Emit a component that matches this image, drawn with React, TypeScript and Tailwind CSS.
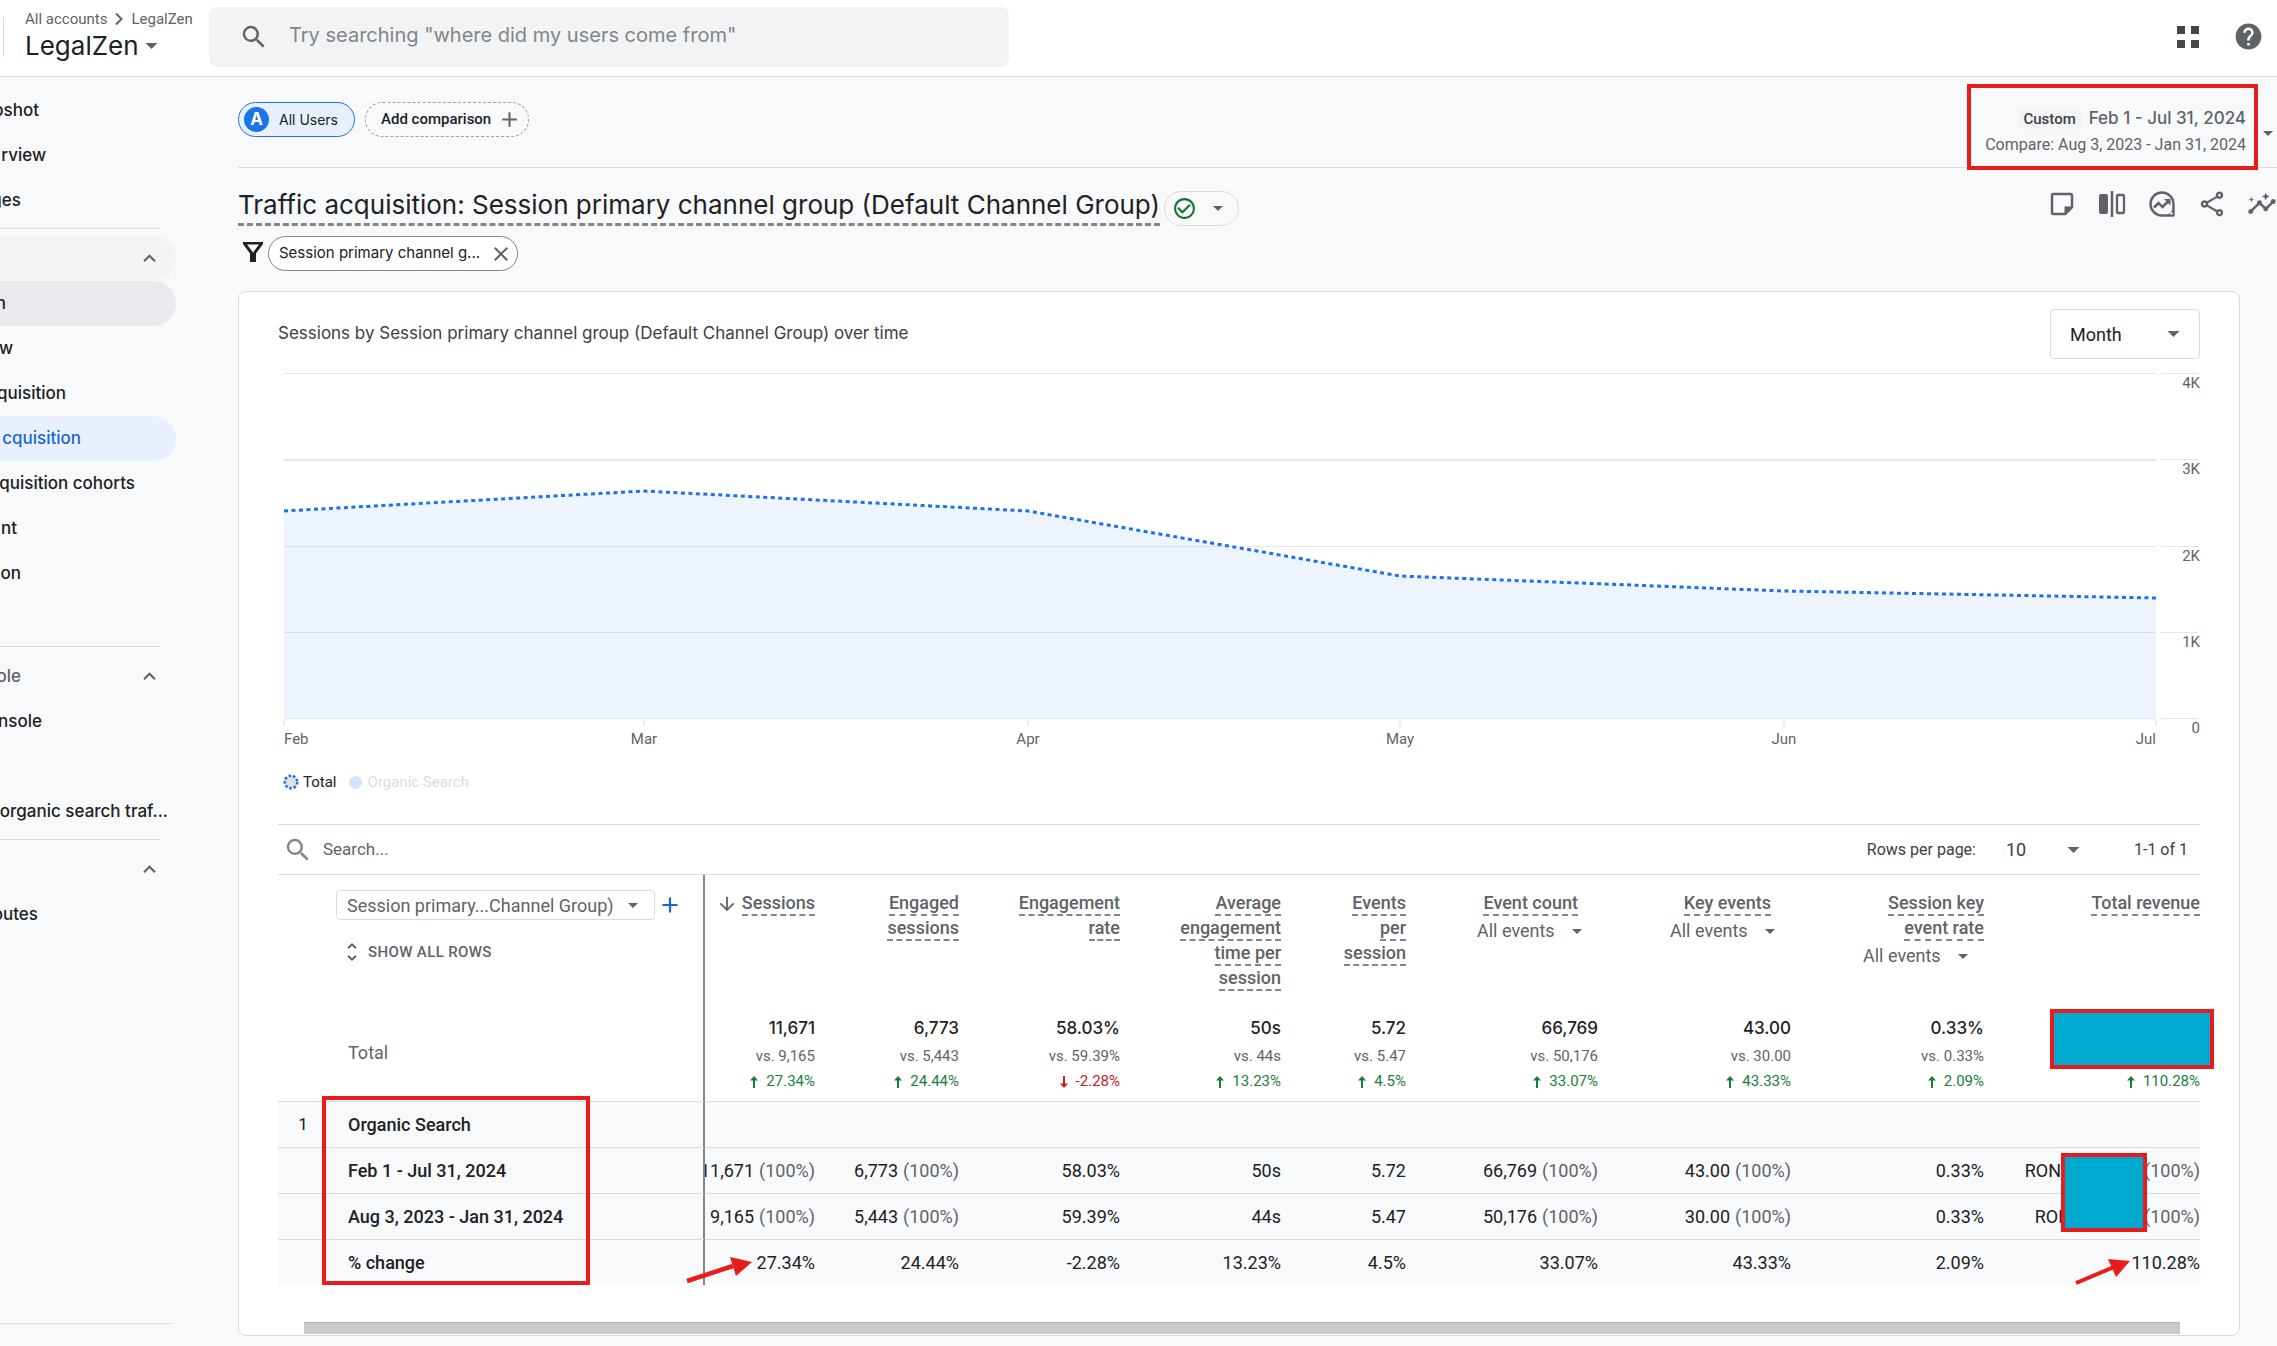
import type { ReactNode } from "react";
import clsx from "clsx";
import {
  MdAdd,
  MdArrowDownward,
  MdCheckCircleOutline,
  MdClose,
  MdHelp,
  MdInsights,
  MdKeyboardArrowUp,
  MdOutlineShare,
  MdSearch,
  MdUnfoldMore,
} from "react-icons/md";

type NavEntry = {
  label?: string;
  // visible part of the label, the panel is scrolled off to the left
  visible?: number;
  tone?: "group" | "parent" | "active" | "muted";
  expandable?: boolean;
};

const NAV: NavEntry[][] = [
  [
    { label: "pshot", visible: 39 },
    { label: "rview", visible: 46 },
    { label: "ges", visible: 21 },
  ],
  [
    { tone: "group", expandable: true },
    { label: "n", visible: 6, tone: "parent" },
    { label: "w", visible: 13 },
    { label: "quisition", visible: 66 },
    { label: "cquisition", visible: 81, tone: "active" },
    { label: "quisition cohorts", visible: 135 },
    { label: "nt", visible: 17 },
    { label: "on", visible: 21 },
    {},
  ],
  [
    { label: "ole", visible: 21, tone: "muted", expandable: true },
    { label: "nsole", visible: 42 },
    {},
    { label: "organic search traf...", visible: 168 },
  ],
  [{ expandable: true }, { label: "outes", visible: 38 }],
];

const MONTHS = [
  { label: "Feb", x: 0, y: 138 },
  { label: "Mar", x: 360, y: 118 },
  { label: "Apr", x: 744, y: 138 },
  { label: "May", x: 1116, y: 203 },
  { label: "Jun", x: 1500, y: 218 },
  { label: "Jul", x: 1872, y: 225 },
];

const TICKS = [
  { label: "4K", y: 0 },
  { label: "3K", y: 86 },
  { label: "2K", y: 173 },
  { label: "1K", y: 259 },
  { label: "0", y: 345 },
];

type Metric = {
  title: string[];
  sorted?: boolean;
  events?: boolean;
  inset?: boolean;
  total?: string;
  previous?: string;
  change: string;
  down?: boolean;
  share?: boolean;
};

const METRICS: Metric[] = [
  { title: ["Sessions"], sorted: true, total: "11,671", previous: "9,165", change: "27.34%", share: true },
  { title: ["Engaged", "sessions"], total: "6,773", previous: "5,443", change: "24.44%", share: true },
  { title: ["Engagement", "rate"], total: "58.03%", previous: "59.39%", change: "-2.28%", down: true },
  { title: ["Average", "engagement", "time per", "session"], total: "50s", previous: "44s", change: "13.23%" },
  { title: ["Events", "per", "session"], total: "5.72", previous: "5.47", change: "4.5%" },
  { title: ["Event count"], events: true, inset: true, total: "66,769", previous: "50,176", change: "33.07%", share: true },
  { title: ["Key events"], events: true, inset: true, total: "43.00", previous: "30.00", change: "43.33%", share: true },
  { title: ["Session key", "event rate"], events: true, total: "0.33%", previous: "0.33%", change: "2.09%" },
  { title: ["Total revenue"], change: "110.28%" },
];

function Caret({ large }: { large?: boolean }) {
  return (
    <svg
      viewBox="0 0 10 5"
      className={clsx("pointer-events-none shrink-0 fill-[#5f6368]", large ? "h-[6px] w-[13px]" : "h-[5px] w-[10px]")}
      aria-hidden="true"
    >
      <path d="M0 0h10L5 5z" />
    </svg>
  );
}

function Header() {
  return (
    <header className="flex h-[77px] shrink-0 items-start border-b border-[#dadce0] bg-white">
      <div className="mt-[17px] ml-[3px] h-10 w-px bg-[#dadce0]" />
      <div className="ml-[21px] w-[184px] pt-2">
        <nav className="flex items-center font-[Roboto,sans-serif] text-[15px] leading-[22px] whitespace-nowrap text-[#5f6368]">
          <a href="#accounts">All accounts</a>
          <svg viewBox="0 0 8 12" className="mx-2 h-3 w-2 fill-none stroke-current stroke-2" aria-hidden="true">
            <path d="M1 0.500L6.500 6L1 11.500" />
          </svg>
          <a href="#legalzen">LegalZen</a>
        </nav>
        <button className="flex items-center gap-1.5 text-[26px] leading-[32px] text-[#202124]">
          LegalZen
          <Caret large />
        </button>
      </div>
      <label className="mt-[7px] flex h-[60px] w-[800px] items-center gap-5 rounded-lg bg-[#f1f3f4] pl-[30px]">
        <MdSearch className="h-[30px] w-[30px] text-[#5f6368]" />
        <input
          type="search"
          aria-label="Search"
          placeholder={'Try searching "where did my users come from"'}
          className="h-full flex-1 bg-transparent pb-1 text-[20px] outline-none placeholder:text-[#80868b]"
        />
      </label>
      <div className="mt-[21px] ml-auto flex items-center gap-[34px] pr-[13px] text-[#5f6368]">
        <button aria-label="Apps">
          <svg viewBox="0 0 22 22" className="h-[22px] w-[22px] fill-[#474747]">
            <path d="M0 0h8v8H0zM14 0h8v8h-8zM0 14h8v8H0zM14 14h8v8h-8z" />
          </svg>
        </button>
        <button aria-label="Help">
          <MdHelp className="h-[31px] w-[31px]" />
        </button>
      </div>
    </header>
  );
}

function Sidebar() {
  return (
    <aside className="flex w-[176px] shrink-0 flex-col overflow-hidden pt-[11px] text-[17px] font-medium text-[#202124]">
      {NAV.map((section, i) => (
        <div key={i}>
          {i > 0 && (
            <div className="h-[13px] pt-[5px]">
              <hr className="w-40 border-[#dadce0]" />
            </div>
          )}
          {section.map((entry, j) => (
            <a
              key={j}
              href="#report"
              className={clsx(
                "flex h-[45px] items-center justify-between rounded-r-full pr-3.5",
                entry.tone === "group" && "bg-[#f1f3f4]",
                entry.tone === "parent" && "bg-[#e8eaed]",
                entry.tone === "active" && "bg-[#e8f0fe] text-[#1967d2]",
                entry.tone === "muted" && "text-[#5f6368]"
              )}
            >
              <span className="flex shrink-0 justify-end whitespace-nowrap" style={{ width: entry.visible ?? 0 }}>
                {entry.label}
              </span>
              {entry.expandable && <MdKeyboardArrowUp className="h-[25px] w-[25px] shrink-0 text-[#5f6368]" />}
            </a>
          ))}
        </div>
      ))}
      <hr className="mt-auto mb-[22px] w-[172px] border-[#dadce0]" />
    </aside>
  );
}

function ComparisonBar() {
  return (
    <div className="flex h-[91px] items-start border-b border-[#dadce0]">
      <button className="mt-[25px] flex h-[35px] items-center gap-2.5 rounded-full border border-[#1a73e8] bg-[#e8f0fe] pr-4 pl-[5px] text-[14px] text-[#202124]">
        <span className="flex h-[25px] w-[25px] items-center justify-center rounded-full bg-[#1a73e8] text-[17px] font-bold text-white">
          A
        </span>
        All Users
      </button>
      <button className="mt-[25px] ml-2.5 flex h-[35px] items-center gap-1.5 rounded-full border border-dashed border-[#9aa0a6] pr-1.5 pl-[15px] font-[Roboto,sans-serif] text-[15px] font-medium text-[#202124]">
        Add comparison
        <MdAdd className="h-[25px] w-[25px] text-[#5f6368]" />
      </button>
      <button className="mt-[30px] ml-auto flex items-center gap-[17px] pr-1 text-right text-[#5f6368]">
        <span className="relative block">
          <span className="flex h-6 items-center justify-end gap-2">
            <span className="bg-[#f1f3f4] px-[5px] font-[Roboto,sans-serif] text-[15px] leading-5 font-medium text-[#3c4043]">
              Custom
            </span>
            <span className="text-[17px] font-medium">Feb 1 - Jul 31, 2024</span>
          </span>
          <span className="block font-[Roboto,sans-serif] text-[16px] leading-7">
            Compare: Aug 3, 2023 - Jan 31, 2024
          </span>
          <span className="absolute -top-[23px] -right-3 -bottom-[11px] -left-[18px] border-4 border-[#e81c1c]" />
        </span>
        <Caret />
      </button>
    </div>
  );
}

function ToolButton({ label, children }: { label: string; children: ReactNode }) {
  return (
    <button aria-label={label} className="h-[30px] w-[30px] text-[#5f6368]">
      {children}
    </button>
  );
}

function TitleRow() {
  return (
    <div className="mt-[18px] flex items-start">
      <h1 className="border-b-[3px] border-dashed border-[#80868b] text-[26px] leading-[37px] whitespace-nowrap text-[#202124]">
        Traffic acquisition: Session primary channel group (Default Channel Group)
      </h1>
      <button
        aria-label="Data quality"
        className="mt-[5px] ml-1 flex h-[35px] w-[75px] items-center gap-4 rounded-full border border-[#dadce0] pl-[7px]"
      >
        <MdCheckCircleOutline className="h-[25px] w-[25px] text-[#137333]" />
        <Caret />
      </button>
      <div className="mt-[3px] ml-auto flex gap-5">
        <ToolButton label="Notes">
          <svg viewBox="0 0 24 24" className="h-full w-full fill-current">
            <path d="M19 5v9.500L14.500 19H5V5h14m0-2H5c-1.100 0-2 .9-2 2v14c0 1.100.9 2 2 2h10l6-6V5c0-1.100-.9-2-2-2z" />
            <path d="M14 14h6.500L14 20.500z" />
          </svg>
        </ToolButton>
        <ToolButton label="Edit comparisons">
          <svg viewBox="0 0 30 30" className="h-full w-full" fill="none" stroke="currentColor">
            <rect x="2" y="5" width="9" height="20" rx="2" fill="currentColor" stroke="none" />
            <path d="M15 2v26" strokeWidth="2.5" />
            <rect x="20" y="6" width="7" height="18" rx="1.5" strokeWidth="2.3" />
          </svg>
        </ToolButton>
        <ToolButton label="Insights">
          <svg viewBox="0 0 30 30" className="h-full w-full" fill="none" stroke="currentColor">
            <path d="M26.5 15A11.5 11.5 0 1 0 15 26.500h11.500z" strokeWidth="2.400" strokeLinejoin="round" />
            <path d="M26.500 18v8.500H18c4 0 7-4 8.500-8.500z" fill="currentColor" stroke="none" />
            <path d="M7 18.500l4.500-4.500 4 4 6-6" strokeWidth="2.600" />
            <path d="M17 10h6.500v6.500z" fill="currentColor" stroke="none" />
            <circle cx="24.500" cy="24.500" r="1.200" fill="#f8f9fb" stroke="none" />
          </svg>
        </ToolButton>
        <ToolButton label="Share">
          <MdOutlineShare className="h-full w-full" />
        </ToolButton>
        <ToolButton label="Explore">
          <MdInsights className="h-full w-full" />
        </ToolButton>
      </div>
    </div>
  );
}

function Chart() {
  const line = MONTHS.map((m) => `${m.x},${m.y}`).join(" ");
  return (
    <div className="mt-3.5 flex gap-[5px] pl-1.5 font-[Roboto,sans-serif] text-[15px]">
      <svg className="h-[376px] min-w-0 flex-1 overflow-visible">
        {TICKS.map((t) => (
          <rect key={t.label} y={t.y} width="100%" height={t.label === "3K" ? 2 : 1} fill="#e6e6e6" />
        ))}
        <svg viewBox="0 0 1872 376" width="100%" height="376" preserveAspectRatio="none">
          <polygon points={`0,345 ${line} 1872,345`} fill="#1a78f8" fillOpacity="0.08" />
          <polyline
            points={line}
            fill="none"
            stroke="#1a73e8"
            strokeWidth="3"
            strokeDasharray="4 3.5"
            vectorEffect="non-scaling-stroke"
          />
        </svg>
        {MONTHS.map((m, i) => {
          const x = `${(m.x / 1872) * 100}%`;
          return (
            <g key={m.label}>
              <line x1={x} x2={x} y1="346" y2="353" stroke="#dadce0" />
              <text x={x} y="371" fill="#5f6368" textAnchor={i === 0 ? "start" : i === MONTHS.length - 1 ? "end" : "middle"}>
                {m.label}
              </text>
            </g>
          );
        })}
      </svg>
      <svg className="h-[376px] w-[39px]">
        {TICKS.map((t) => (
          <g key={t.label}>
            <rect y={t.y} width="37" height="1" fill="#e6e6e6" />
            <text x="39" y={t.y + 15} textAnchor="end" fill="#5f6368">
              {t.label}
            </text>
          </g>
        ))}
      </svg>
    </div>
  );
}

function Legend() {
  return (
    <div className="mt-[21px] flex h-6 items-center pl-[5px] font-[Roboto,sans-serif] text-[15px] text-[#202124]">
      <svg viewBox="0 0 16 16" className="mr-1 h-4 w-4">
        <circle cx="8" cy="8" r="6.300" fill="#dfe1e5" stroke="#1a73e8" strokeWidth="2.500" strokeDasharray="2.600 1.800" />
      </svg>
      Total
      <span className="mr-1.5 ml-3 h-[13px] w-[13px] rounded-full bg-[#d2e3fc]" />
      <span className="text-[#dadce0]">Organic Search</span>
    </div>
  );
}

function TableToolbar() {
  return (
    <div className="mt-[30px] flex h-[51px] items-center border-y border-[#dadce0] font-[Roboto,sans-serif] text-[16px] text-[#3c4043]">
      <MdSearch className="ml-[5px] h-[30px] w-[30px] text-[#80868b]" />
      <input
        type="search"
        aria-label="Search rows"
        placeholder="Search..."
        className="ml-2.5 flex-1 text-[17px] outline-none placeholder:text-[#5f6368]"
      />
      <label htmlFor="rows-per-page">Rows per page:</label>
      <span className="ml-[30px] flex w-[74px] items-center">
        <select id="rows-per-page" className="-mr-[13px] w-full appearance-none text-[18px] outline-none">
          <option>10</option>
        </select>
        <Caret large />
      </span>
      <span className="mr-3 ml-[54px]">1-1 of 1</span>
    </div>
  );
}

// right aligned content that is cut off at the left edge of its column
function Cell({ children, share }: { children: ReactNode; share?: boolean }) {
  return (
    <div className="flex justify-end gap-[5px] overflow-hidden whitespace-nowrap">
      <span>{children}</span>
      {share && <span className="text-[#5f6368]">(100%)</span>}
    </div>
  );
}

function Redaction({ className }: { className: string }) {
  return <span className={clsx("absolute z-10 border-4 border-[#e81c1c] bg-[#00a9ce]", className)} />;
}

function ReportTable() {
  const stub = "border-r-2 border-r-[#80868b] pl-5 text-left";
  const line = "border-t border-t-[#dadce0]";
  return (
    <table className="w-full table-fixed border-separate border-spacing-0 font-[Roboto,sans-serif] text-[18px] text-[#202124]">
      <colgroup>
        <col className="w-[50px]" />
        <col className="w-[377px]" />
        <col className="w-[110px]" />
        <col className="w-[144px]" />
        <col className="w-[161px]" />
        <col className="w-[161px]" />
        <col className="w-[125px]" />
        <col className="w-[192px]" />
        <col className="w-[193px]" />
        <col className="w-[193px]" />
        <col />
      </colgroup>
      <thead>
        <tr className="h-[129px] align-top text-[#5f6368]">
          <td />
          <th className={clsx(stub, "pt-[15px] font-normal")}>
            <div className="-ml-3 flex items-center gap-1.5">
              <span className="flex h-[30px] w-[319px] items-center rounded border border-[#dadce0] pr-4">
                <select
                  aria-label="Primary dimension"
                  className="-mr-2.5 w-full appearance-none pl-2.5 text-[18px] outline-none"
                >
                  <option>Session primary...Channel Group)</option>
                </select>
                <Caret />
              </span>
              <button aria-label="Add dimension">
                <MdAdd className="-ml-1 h-[26px] w-[26px] text-[#1967d2]" />
              </button>
            </div>
            <button className="mt-5 -ml-2 flex items-center gap-1 text-[15px] leading-[22px] font-medium tracking-wide">
              <MdUnfoldMore className="h-6 w-6" />
              SHOW ALL ROWS
            </button>
          </th>
          {METRICS.map((m) => (
            <th key={m.title.join()} className="pt-4 font-medium">
              <div className="flex flex-col items-end">
                {m.title.map((part) => (
                  <span key={part} className={clsx("flex items-center", m.inset && "mr-5")}>
                    {m.sorted && <MdArrowDownward className="mr-1 h-[22px] w-[22px]" />}
                    <span className="border-b-2 border-dashed border-[#80868b] leading-[23px] whitespace-nowrap">
                      {part}
                    </span>
                  </span>
                ))}
                {m.events && (
                  <span className="mt-[3px] mr-4 flex w-[105px] items-center font-normal">
                    <select
                      aria-label={`${m.title.join(" ")} filter`}
                      className="-mr-2.5 w-full appearance-none leading-6 outline-none"
                    >
                      <option>All events</option>
                    </select>
                    <Caret />
                  </span>
                )}
              </div>
            </th>
          ))}
        </tr>
      </thead>
      <tbody>
        <tr className="h-[97px]">
          <td />
          <th className={clsx(stub, "font-normal text-[#5f6368]")}>Total</th>
          {METRICS.map((m) => (
            <td key={m.title.join()} className="relative pb-[7px] text-right align-bottom text-[15px] leading-[25px] text-[#5f6368]">
              {m.total ? (
                <>
                  <div className="font-[Inter,sans-serif] text-[17px] leading-[31px] font-medium text-[#202124]">{m.total}</div>
                  <div>vs. {m.previous}</div>
                </>
              ) : (
                <Redaction className="top-[5px] -right-3.5 h-[60px] w-[164px]" />
              )}
              <div className={clsx("flex items-center justify-end gap-2", m.down ? "text-[#c5221f]" : "text-[#188038]")}>
                <svg
                  viewBox="0 0 8 12"
                  className={clsx("h-3 w-2 fill-none stroke-current stroke-2", m.down && "rotate-180")}
                  aria-hidden="true"
                >
                  <path d="M4 12V2" />
                  <path d="M0 4.500L4 0l4 4.500z" className="fill-current stroke-none" />
                </svg>
                {m.change}
              </div>
            </td>
          ))}
        </tr>
        <tr className="h-[46px] bg-[#f8f9fb]">
          <td className={clsx(line, "text-center text-[17px]")}>1</td>
          <th className={clsx(line, stub, "relative font-medium")}>
            Organic Search
            <span className="absolute -top-1.5 -left-1.5 z-10 h-[189px] w-[268px] border-4 border-[#e81c1c]" />
          </th>
          {METRICS.map((m) => (
            <td key={m.title.join()} className={line} />
          ))}
        </tr>
        <tr className="h-[46px] bg-[#f8f9fb]">
          <td className={line} />
          <th className={clsx(line, stub, "font-medium")}>Feb 1 - Jul 31, 2024</th>
          {METRICS.map((m) => (
            <td key={m.title.join()} className={clsx(line, "relative")}>
              {m.total ? (
                <Cell share={m.share}>{m.total}</Cell>
              ) : (
                <>
                  <div className="flex justify-end gap-[83px]">
                    <span>RON</span>
                    <span className="text-[#5f6368]">(100%)</span>
                  </div>
                  <Redaction className="top-[5px] right-[53px] h-[79px] w-[86px]" />
                </>
              )}
            </td>
          ))}
        </tr>
        <tr className="h-[46px] bg-[#f8f9fb]">
          <td className={line} />
          <th className={clsx(line, stub, "font-medium")}>Aug 3, 2023 - Jan 31, 2024</th>
          {METRICS.map((m) => (
            <td key={m.title.join()} className={line}>
              {m.previous ? (
                <Cell share={m.share}>{m.previous}</Cell>
              ) : (
                <div className="flex justify-end gap-[73px]">
                  <span>RON</span>
                  <span className="text-[#5f6368]">(100%)</span>
                </div>
              )}
            </td>
          ))}
        </tr>
        <tr className="h-[46px] bg-[#f8f9fb]">
          <td className={line} />
          <th className={clsx(line, stub, "font-medium")}>% change</th>
          {METRICS.map((m, i) => (
            <td key={m.title.join()} className={clsx(line, "relative")}>
              <Cell>{m.change}</Cell>
              {i === 0 && (
                <svg viewBox="0 0 65 26" className="absolute top-[18px] right-[63px] z-10 h-[26px] w-[65px] overflow-visible">
                  <path d="M0 23L46 8" stroke="#e81c1c" strokeWidth="4.500" />
                  <path d="M43 -1L65 4L49 18z" fill="#e81c1c" />
                </svg>
              )}
              {i === METRICS.length - 1 && (
                <svg viewBox="0 0 54 26" className="absolute top-[19px] right-[70px] z-10 h-[26px] w-[54px] overflow-visible">
                  <path d="M0 24L38 8" stroke="#e81c1c" strokeWidth="4" />
                  <path d="M32 0L54 2L40 18z" fill="#e81c1c" />
                </svg>
              )}
            </td>
          ))}
        </tr>
      </tbody>
    </table>
  );
}

export default function App() {
  return (
    <div className="flex min-h-screen flex-col overflow-hidden bg-[#f8f9fb] font-[Inter,sans-serif]">
      <Header />
      <div className="flex flex-1">
        <Sidebar />
        <main className="min-w-0 flex-1 pb-2.5 pl-[62px]">
          <ComparisonBar />
          <TitleRow />
          <div className="mt-2.5 flex items-center">
            <svg viewBox="0 0 30 30" className="h-[30px] w-[30px] fill-[#202124]" aria-hidden="true">
              <path d="M5 3h20v2l-7 9.500V23h-6v-8.500L5 5zM9 5.500l6 8 6-8z" fillRule="evenodd" />
            </svg>
            <button className="flex h-[35px] w-[250px] items-center justify-between rounded-full border border-[#80868b] bg-white pr-1 pl-2.5 text-[15px] text-[#202124]">
              Session primary channel g...
              <MdClose className="h-6 w-6 text-[#5f6368]" />
            </button>
          </div>
          <section className="mt-5 mr-[37px] rounded-lg border border-[#dadce0] bg-white px-[39px] pt-[17px] pb-px">
            <div className="flex items-center justify-between">
              <h2 className="text-[17px] text-[#3c4043]">
                Sessions by Session primary channel group (Default Channel Group) over time
              </h2>
              <span className="flex h-[50px] w-[150px] items-center rounded border border-[#dadce0] pr-[19px] font-[Roboto,sans-serif]">
                <select
                  aria-label="Granularity"
                  className="-mr-[13px] h-full w-full appearance-none pl-[19px] text-[18px] text-[#202124] outline-none"
                >
                  <option>Month</option>
                </select>
                <Caret large />
              </span>
            </div>
            <Chart />
            <Legend />
            <TableToolbar />
            <ReportTable />
            <div className="mt-[37px] mr-5 ml-[26px] h-3 border-t border-[#b4b4b4] bg-[#c9c9c9]" />
          </section>
        </main>
      </div>
    </div>
  );
}
